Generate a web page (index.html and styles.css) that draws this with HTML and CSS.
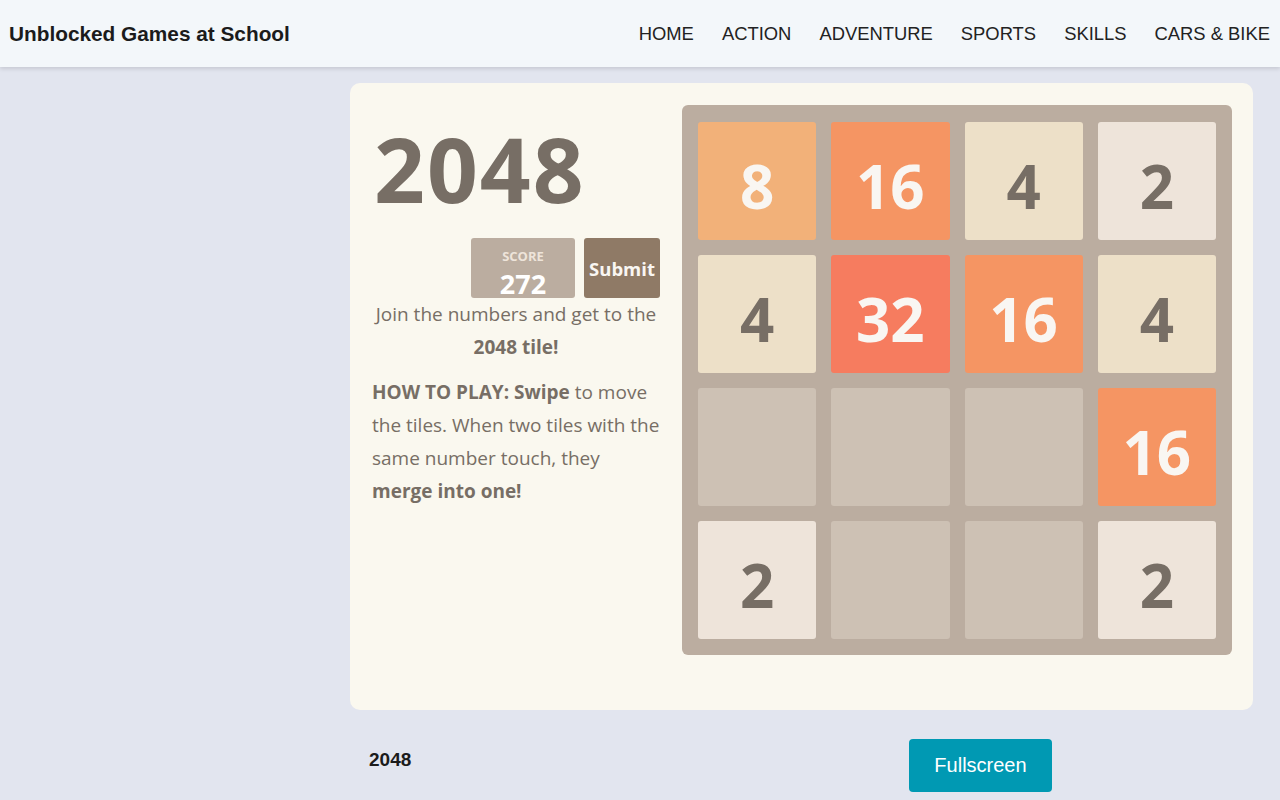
FILE: index.html
```html
<!DOCTYPE html>
<html lang="en">
<head>
<meta charset="utf-8">
<title>2048 - Unblocked Games at School</title>
<link rel="stylesheet" href="styles.css">
</head>
<body>
<header class="topbar">
  <div class="brand">Unblocked Games at School</div>
  <nav class="nav">
    <a href="#">HOME</a>
    <a href="#">ACTION</a>
    <a href="#">ADVENTURE</a>
    <a href="#">SPORTS</a>
    <a href="#">SKILLS</a>
    <a href="#">CARS &amp; BIKE</a>
  </nav>
</header>
<main class="main">
  <section class="card">
    <div class="info">
      <h1 class="title">2048</h1>
      <div class="scores">
        <div class="score-box">
          <span class="score-label">SCORE</span>
          <span class="score-value">272</span>
        </div>
        <button class="submit">Submit</button>
      </div>
      <p class="intro">Join the numbers and get to the <strong>2048 tile!</strong></p>
      <p class="howto"><strong>HOW TO PLAY: Swipe</strong> to move the tiles. When two tiles with the same number touch, they <strong>merge into one!</strong></p>
    </div>
    <div class="board">
      <div class="tile t8">8</div>
      <div class="tile t16">16</div>
      <div class="tile t4">4</div>
      <div class="tile t2">2</div>
      <div class="tile t4">4</div>
      <div class="tile t32">32</div>
      <div class="tile t16">16</div>
      <div class="tile t4">4</div>
      <div class="tile"></div>
      <div class="tile"></div>
      <div class="tile"></div>
      <div class="tile t16">16</div>
      <div class="tile t2">2</div>
      <div class="tile"></div>
      <div class="tile"></div>
      <div class="tile t2">2</div>
    </div>
  </section>
  <div class="below">
    <div class="game-name">2048</div>
    <div class="fs-wrap"><button class="fullscreen">Fullscreen</button></div>
  </div>
</main>
</body>
</html>
```
FILE: styles.css
```css
* { box-sizing: border-box; }
html, body { margin: 0; padding: 0; }
body {
  background: #e2e5ef;
  font-family: "Liberation Sans", Arial, sans-serif;
  width: 1280px;
  height: 800px;
  overflow: hidden;
}
.topbar {
  height: 67px;
  background: #f3f7fa;
  box-shadow: 0 2px 4px rgba(0,0,0,0.12);
  display: flex;
  align-items: center;
  justify-content: space-between;
  padding: 0 10px 0 9px;
  position: relative;
}
.brand {
  font-size: 20.8px;
  font-weight: bold;
  color: #1b1b1b;
  padding-top: 1px;
}
.nav {
  display: flex;
  gap: 28px;
  padding-top: 1px;
}
.nav a {
  color: #222;
  text-decoration: none;
  font-size: 18.4px;
}
.main {
  padding: 16px 0 0 350px;
  width: 1253px;
}
.card {
  background: #faf8ef;
  border-radius: 10px;
  padding: 22px 21px 55px 22px;
  display: flex;
  gap: 22px;
  height: 627px;
}
.info {
  width: 288px;
  color: #776e65;
  font-family: "Open Sans", "Noto Sans", sans-serif;
}
.title {
  margin: 20px 0 0 2px;
  font-size: 89px;
  line-height: 88px;
  letter-spacing: 2px;
  font-weight: bold;
  color: #776e65;
}
.scores {
  margin-top: 25px;
  display: flex;
  justify-content: flex-end;
  gap: 9px;
  height: 60px;
}
.score-box {
  width: 104px;
  height: 60px;
  background: #bbada0;
  border-radius: 3px;
  display: flex;
  flex-direction: column;
  align-items: center;
  padding-top: 9px;
}
.score-label {
  font-size: 13px;
  font-weight: bold;
  line-height: normal;
  color: #eee4da;
}
.score-value {
  font-size: 27px;
  font-weight: bold;
  line-height: normal;
  color: #ffffff;
}
.submit {
  width: 76px;
  border: none;
  border-radius: 3px;
  background: #8f7a66;
  color: #f9f6f2;
  font-family: "Open Sans", "Noto Sans", sans-serif;
  font-weight: bold;
  font-size: 18.5px;
  padding: 0;
}
.intro {
  margin: 0;
  text-align: center;
  font-size: 19px;
  line-height: 33px;
}
.howto {
  margin: 12px 0 0;
  font-size: 19px;
  line-height: 33px;
}
.info strong { font-weight: bold; }
.board {
  width: 550px;
  height: 550px;
  background: #bbada0;
  border-radius: 6px;
  padding: 17px 16px 16px 16px;
  display: grid;
  grid-template-columns: repeat(4, 1fr);
  grid-template-rows: repeat(4, 1fr);
  gap: 15px;
}
.tile {
  background: #cdc1b4;
  border-radius: 3px;
  display: flex;
  align-items: center;
  justify-content: center;
  padding-top: 10px;
  font-family: "Open Sans", "Noto Sans", sans-serif;
  font-weight: bold;
  font-size: 60px;
  color: #776e65;
}
.t2 { background: #eee4da; }
.t4 { background: #ede0c8; }
.t8 { background: #f2b179; color: #f9f6f2; }
.t16 { background: #f59563; color: #f9f6f2; }
.t32 { background: #f67c5f; color: #f9f6f2; }
.below {
  display: grid;
  grid-template-columns: 559px auto;
  margin-top: 29px;
}
.game-name {
  font-size: 19px;
  font-weight: bold;
  color: #1b1b1b;
  padding: 10px 0 0 19px;
}
.fs-wrap {
  display: flex;
}
.fullscreen {
  width: 143px;
  height: 53px;
  background: #0099b3;
  color: #fff;
  border: none;
  border-radius: 4px;
  font-family: "Liberation Sans", Arial, sans-serif;
  font-size: 20px;
}
```
